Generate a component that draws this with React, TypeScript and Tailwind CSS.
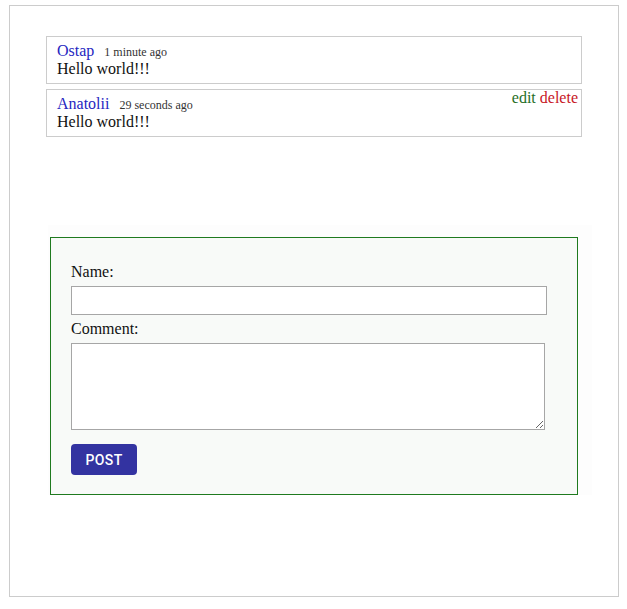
import React from "react";

function Comment({ name, time, text, actions }: { name: string; time: string; text: string; actions?: boolean }) {
  return (
    <div className="relative h-[48px] border border-[#cccccc] px-[10px] py-[5px] leading-[18px] text-[16px]">
      <div className="h-[18px] overflow-visible whitespace-nowrap">
        <span className="text-[#2626bf]">{name}</span>
        <span className="ml-[10px] text-[12px] leading-[12px] text-[#333333]">{time}</span>
      </div>
      <div className="h-[18px] text-[#111111]">{text}</div>
      {actions && (
        <div className="absolute top-[-1px] right-[3px] leading-[18px]">
          <span className="text-[#1f6e26]">edit</span> <span className="text-[#c8161f]">delete</span>
        </div>
      )}
    </div>
  );
}

export default function App() {
  return (
    <div className="font-['Liberation_Serif','Times_New_Roman',serif] bg-white w-[627px] h-[609px] pt-[5px] pl-[9px]">
      <div className="w-[610px] h-[592px] border border-[#cccccc]">
        <div className="mt-[30px] mx-[36px] flex flex-col gap-[5px]">
          <Comment name="Ostap" time="1 minute ago" text="Hello world!!!" />
          <Comment name="Anatolii" time="29 seconds ago" text="Hello world!!!" actions />
        </div>
        <div className="mt-[88px] ml-[38px] w-[544px] pt-[12px] bg-[#fdfdfd]">
          <form className="ml-[2px] w-[528px] h-[258px] border border-[#1f7a1f] bg-[#f8faf8] pl-[20px] pt-[25px] flex flex-col items-start text-[16px] leading-[18px] text-[#111111]">
            <label className="h-[18px]">Name:</label>
            <input type="text" className="mt-[5px] w-[476px] h-[29px] border border-[#a6a6a6] bg-white outline-none" />
            <label className="mt-[5px] h-[18px]">Comment:</label>
            <textarea className="mt-[5px] w-[474px] h-[87px] border border-[#a6a6a6] bg-white outline-none resize" />
            <button type="button" className="mt-[14px] w-[66px] h-[31px] rounded-[4px] bg-[#3333a1] text-white font-['Roboto',sans-serif] font-medium text-[14px] tracking-[0.4px] uppercase flex items-center justify-center">
              Post
            </button>
          </form>
        </div>
      </div>
    </div>
  );
}
